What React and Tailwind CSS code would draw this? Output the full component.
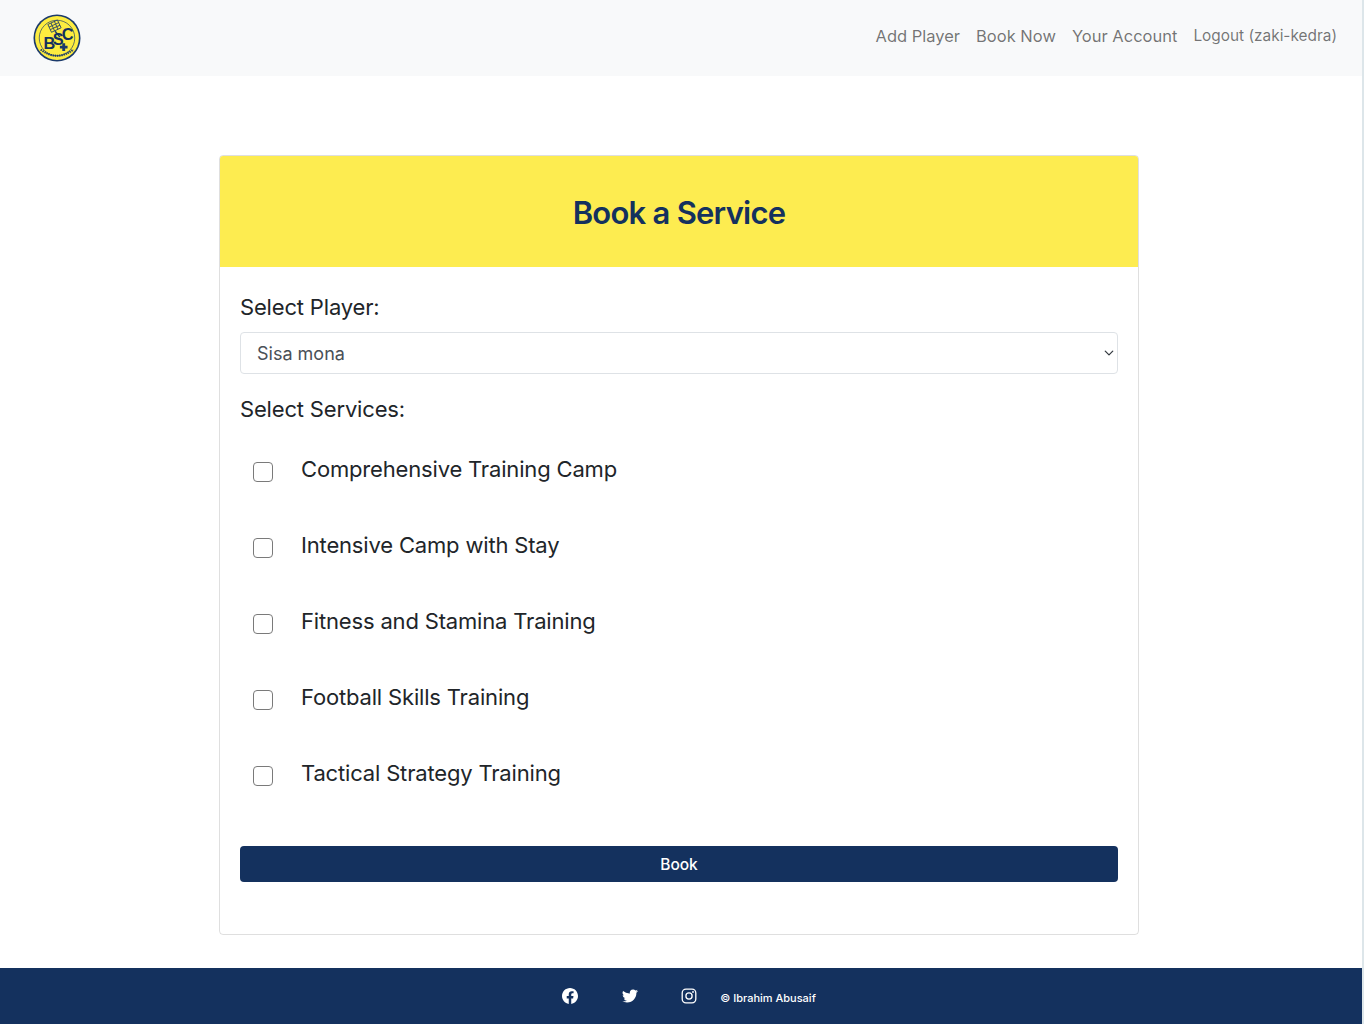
function Logo() {
  return (
    <svg width="48" height="48" viewBox="0 0 50 50">
      <circle cx="25" cy="25" r="24.5" fill="#1b3a6b" />
      <circle cx="25" cy="25" r="22.8" fill="#fdec3f" />
      <circle cx="25" cy="25" r="18.5" fill="none" stroke="#1b3a6b" strokeWidth="0.7" />
      <g transform="rotate(-25 23 14)">
        <rect x="17.5" y="8" width="11" height="9" fill="#fdec3f" stroke="#1b3a6b" strokeWidth="0.8" />
        <path d="M17.5 11h11M17.5 14h11M21 8v9M25 8v9" stroke="#1b3a6b" strokeWidth="1" opacity="0.85" />
      </g>
      <path d="M23 18 L28 24" stroke="#1b3a6b" strokeWidth="1.4" />
      <path d="M28 33 h2.5 v-2.5 h3 v2.5 h2.5 v3 h-2.5 v2.5 h-3 v-2.5 h-2.5 Z" fill="#1b3a6b" />
      <text x="11" y="36" fontSize="17" fontWeight="700" fill="#14315e" fontFamily="Liberation Sans, sans-serif">B</text>
      <text x="20.5" y="32" fontSize="17" fontWeight="700" fill="#14315e" fontFamily="Liberation Sans, sans-serif">S</text>
      <text x="30" y="27" fontSize="17" fontWeight="700" fill="#14315e" fontFamily="Liberation Sans, sans-serif">C</text>
      <path d="M8 37 Q25 50 42 37" fill="none" stroke="#1b3a6b" strokeWidth="2.2" strokeDasharray="1.5 0.8" />
    </svg>
  );
}
function Fb() {
  return (
    <svg width="16" height="16" viewBox="0 0 16 16" fill="#fff">
      <path d="M16 8.05C16 3.6 12.42 0 8 0S0 3.6 0 8.05c0 4.02 2.93 7.35 6.75 7.95v-5.62H4.72V8.05h2.03V6.28c0-2.02 1.2-3.13 3.02-3.13.88 0 1.8.16 1.8.16v1.98h-1.01c-1 0-1.31.62-1.31 1.26v1.5h2.22l-.35 2.33H9.25V16C13.07 15.4 16 12.07 16 8.05z" />
    </svg>
  );
}
function Tw() {
  return (
    <svg width="16" height="16" viewBox="0 0 16 16" fill="#fff">
      <path d="M5.03 14.5c6.04 0 9.34-5 9.34-9.34 0-.14 0-.28-.01-.42A6.7 6.7 0 0 0 16 3.04a6.56 6.56 0 0 1-1.89.52 3.3 3.3 0 0 0 1.45-1.82 6.57 6.57 0 0 1-2.08.8 3.28 3.28 0 0 0-5.6 2.99A9.32 9.32 0 0 1 1.11 3.1a3.28 3.28 0 0 0 1.02 4.38A3.26 3.26 0 0 1 .64 7.07v.04a3.28 3.28 0 0 0 2.64 3.22 3.29 3.29 0 0 1-1.49.06 3.29 3.29 0 0 0 3.07 2.28A6.59 6.59 0 0 1 0 13.03a9.29 9.29 0 0 0 5.03 1.47z" />
    </svg>
  );
}
function Ig() {
  return (
    <svg width="16" height="16" viewBox="0 0 16 16" fill="none" stroke="#fff">
      <rect x="1.2" y="1.2" width="13.6" height="13.6" rx="3.8" strokeWidth="1.3" />
      <circle cx="8" cy="8" r="3.1" strokeWidth="1.3" />
      <circle cx="12" cy="4" r="0.9" fill="#fff" stroke="none" />
    </svg>
  );
}
const services = [
  "Comprehensive Training Camp",
  "Intensive Camp with Stay",
  "Fitness and Stamina Training",
  "Football Skills Training",
  "Tactical Strategy Training",
];
export default function App() {
  return (
    <div className="flex min-h-[1024px] bg-[#dde6ea] font-['Inter',sans-serif] text-[#212529]">
      <div className="w-[1362px] shrink-0 flex flex-col bg-white">
        <nav className="h-[76px] bg-[#f8f9fa] flex items-center justify-between pl-[33px] pr-[25px]">
          <Logo />
          <div className="flex items-center pb-[4px] text-[#0000008c] text-[16.5px] leading-[24px]">
            <span className="ml-[16px]">Add Player</span>
            <span className="ml-[16px]">Book Now</span>
            <span className="ml-[16px]">Your Account</span>
            <span className="ml-[16px] text-[15.4px]">Logout (zaki-kedra)</span>
          </div>
        </nav>
        <main className="flex-1 flex justify-center pt-[79px] pb-[33px] pr-[4px]">
          <div className="w-[920px] h-[780px] border border-[#00000020] rounded-[4px] flex flex-col overflow-hidden">
            <div className="h-[111px] bg-[#fdec50] flex items-center justify-center shrink-0 pt-[2px]">
              <h1 className="text-[31px] font-semibold leading-[38px] text-[#14315e] tracking-[-0.75px]">Book a Service</h1>
            </div>
            <div className="px-[20px] pt-[25px] flex flex-col">
              <label className="text-[22px] leading-[30px] block h-[34px] tracking-[-0.17px]">Select Player:</label>
              <div className="mt-[6px] h-[42px] border border-[#dee2e6] rounded-[4px] flex items-center justify-between pl-[16px] pr-[3px] text-[#495057] text-[18px]">
                <span>Sisa mona</span>
                <svg width="10" height="10" viewBox="0 0 16 16" fill="none" stroke="#343a40" strokeWidth="2" strokeLinecap="round" strokeLinejoin="round">
                  <path d="M2 5l6 6 6-6" />
                </svg>
              </div>
              <label className="mt-[20px] text-[22px] leading-[30px] block tracking-[-0.17px]">Select Services:</label>
              <div className="mt-[26px] flex flex-col gap-[38px]">
                {services.map((s) => (
                  <div key={s} className="flex h-[38px] items-start">
                    <span className="ml-[13px] mt-[12px] w-[20px] h-[20px] rounded-[4px] border-[1.5px] border-[#7a7a7a] bg-white shrink-0" />
                    <span className="ml-[28px] text-[22px] leading-[38px] tracking-[-0.17px]">{s}</span>
                  </div>
                ))}
              </div>
              <button className="mt-[54px] h-[36px] pt-[1px] rounded-[4px] bg-[#14315e] text-white text-[15.5px] font-medium">Book</button>
            </div>
          </div>
        </main>
        <footer className="h-[56px] bg-[#14315e] flex items-center justify-center text-white pl-[16px]">
          <div className="flex items-center">
            <Fb />
            <span className="w-[44px]" />
            <Tw />
            <span className="w-[43px]" />
            <Ig />
            <span className="ml-[23px] mt-[5px] text-[11px] font-medium">© Ibrahim Abusaif</span>
          </div>
        </footer>
      </div>
    </div>
  );
}
